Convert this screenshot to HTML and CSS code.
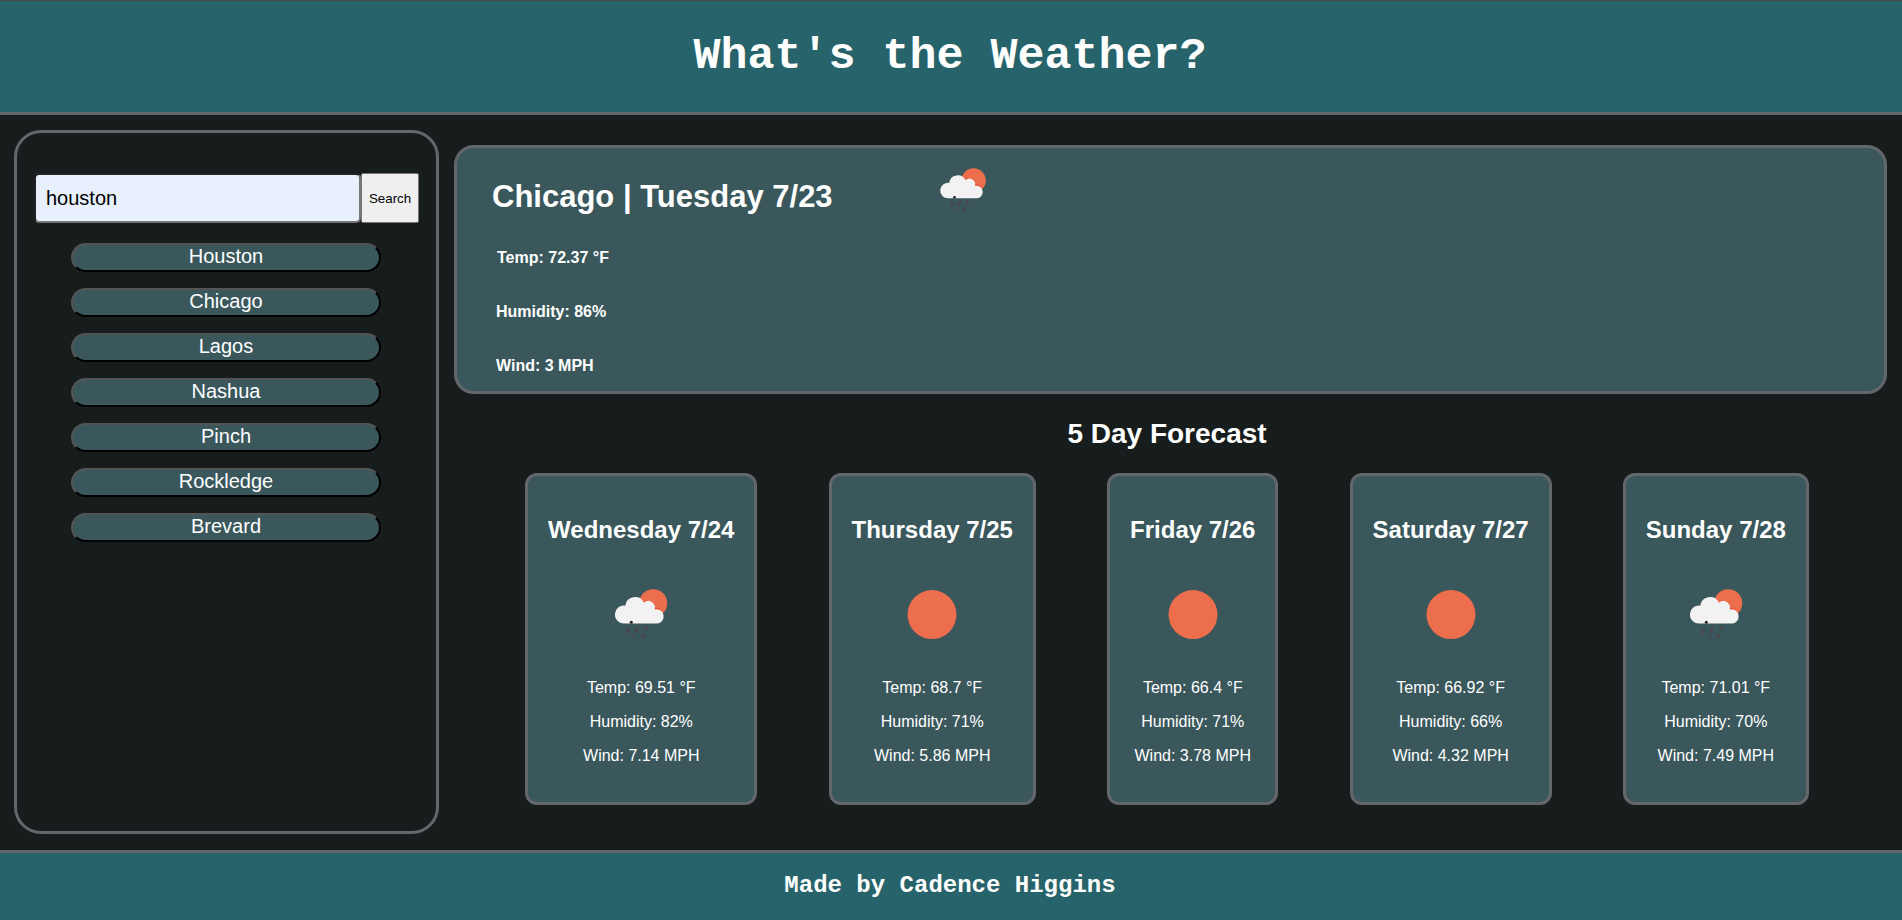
FILE: index.html
```html
<!DOCTYPE html>
<html lang="en">
<head>
<meta charset="utf-8">
<title>What's the Weather?</title>
<link rel="stylesheet" href="styles.css">
</head>
<body>
<svg class="defs" width="0" height="0">
  <symbol id="rain" viewBox="0 0 80 70">
    <circle cx="52.2" cy="28.2" r="14" fill="#ec6e4c"/>
    <path d="M40.5 30a7 7 0 0 1 13 3.800a6.500 6.500 0 0 1 6.300 2.500" fill="none" stroke="#e8472b" stroke-width="2"/>
    <path d="M23 48.600a9 9 0 1 1 1.200-17.900a9.900 9.900 0 0 1 18.600-3.200a6.800 6.800 0 0 1 11 6.900a7.200 7.200 0 1 1 1.300 14.200z" fill="#f2f2f2"/>
    <circle cx="30.300" cy="47.300" r="1.500" fill="#222"/>
    <path d="M27.600 54.500l-1.200 3M36.600 53.500l-1.600 3M45.400 51.500l-.7 1.500M33.400 61l-.2.500M42.300 60l-1 2.500" stroke="#4c484a" stroke-width="2.700" stroke-linecap="round"/>
  </symbol>
  <symbol id="sun" viewBox="0 0 80 70">
    <circle cx="40" cy="39.600" r="24.500" fill="#ec6e4c"/>
  </symbol>
</svg>
<header class="header"><h1 class="title">What's the Weather?</h1></header>
<main class="main">
  <aside class="sidebar">
    <form class="search">
      <input class="search-input" type="text" value="houston">
      <button class="search-button" type="button">Search</button>
    </form>
    <div class="history">
      <button class="city">Houston</button>
      <button class="city">Chicago</button>
      <button class="city">Lagos</button>
      <button class="city">Nashua</button>
      <button class="city">Pinch</button>
      <button class="city">Rockledge</button>
      <button class="city">Brevard</button>
    </div>
  </aside>
  <section class="weather">
    <article class="current">
      <div class="current-info">
        <h2 class="current-title">Chicago | Tuesday 7/23</h2>
        <p class="reading reading-temp">Temp: 72.37 °F</p>
        <p class="reading">Humidity: 86%</p>
        <p class="reading">Wind: 3 MPH</p>
      </div>
      <svg class="current-icon"><use href="#rain"/></svg>
    </article>
    <div class="outlook">
      <h2 class="forecast-title">5 Day Forecast</h2>
      <div class="forecast">
        <article class="day"><h3 class="day-title">Wednesday 7/24</h3><svg class="day-icon"><use href="#rain"/></svg><p class="stat">Temp: 69.51 °F</p><p class="stat">Humidity: 82%</p><p class="stat">Wind: 7.14 MPH</p></article>
        <article class="day"><h3 class="day-title">Thursday 7/25</h3><svg class="day-icon"><use href="#sun"/></svg><p class="stat">Temp: 68.7 °F</p><p class="stat">Humidity: 71%</p><p class="stat">Wind: 5.86 MPH</p></article>
        <article class="day"><h3 class="day-title">Friday 7/26</h3><svg class="day-icon"><use href="#sun"/></svg><p class="stat">Temp: 66.4 °F</p><p class="stat">Humidity: 71%</p><p class="stat">Wind: 3.78 MPH</p></article>
        <article class="day"><h3 class="day-title">Saturday 7/27</h3><svg class="day-icon"><use href="#sun"/></svg><p class="stat">Temp: 66.92 °F</p><p class="stat">Humidity: 66%</p><p class="stat">Wind: 4.32 MPH</p></article>
        <article class="day"><h3 class="day-title">Sunday 7/28</h3><svg class="day-icon"><use href="#rain"/></svg><p class="stat">Temp: 71.01 °F</p><p class="stat">Humidity: 70%</p><p class="stat">Wind: 7.49 MPH</p></article>
      </div>
    </div>
  </section>
</main>
<footer class="footer"><h2 class="credit">Made by Cadence Higgins</h2></footer>
</body>
</html>
```
FILE: styles.css
```css
* { box-sizing: border-box; }
body {
  margin: 0;
  height: 920px;
  display: flex;
  flex-direction: column;
  overflow: hidden;
  background: #171c1c;
  color: #fff;
  font-family: Arial, "Liberation Sans", sans-serif;
}
h1, h2, h3, p { margin: 0; }
.defs { position: absolute; }
.header {
  height: 115px;
  border-top: 1px solid #4a4a4a;
  border-bottom: 3px solid #63676c;
  background: #27636b;
  text-align: center;
}
.title {
  padding: 30px 2px 0 0;
  font: bold 45px/51px "Courier New", "Liberation Mono", monospace;
}
.main { flex: 1; display: flex; }
.sidebar {
  width: 425px;
  height: 704px;
  margin: 15px 0 0 14px;
  padding: 40px 17px 0 17px;
  border: 3px solid #63676c;
  border-radius: 27px;
}
.search { display: flex; align-items: flex-end; }
.search-input {
  width: 328px;
  height: 50px;
  padding: 0 10px;
  border: 2px inset #767676;
  border-radius: 5px;
  background: #e8f0fe;
  color: #000;
  font: 20px Arial, "Liberation Sans", sans-serif;
}
.search-button {
  width: 58px;
  height: 50px;
  padding: 0;
  border: 1px solid #767676;
  border-radius: 2px;
  background: #efefef;
  color: #000;
  font: 13.333px Arial, "Liberation Sans", sans-serif;
}
.history {
  display: flex;
  flex-direction: column;
  gap: 16px;
  margin: 20px 38px 0 37px;
}
.city {
  height: 29px;
  padding: 0 6px 2px;
  border: 2px outset #000;
  border-radius: 15px;
  background: #3a575c;
  color: #fff;
  font: 20px/23px Arial, "Liberation Sans", sans-serif;
}
.weather { width: 1433px; margin: 30px 0 0 15px; }
.current {
  display: flex;
  height: 249px;
  padding: 0 0 0 36px;
  border: 3px solid #63676c;
  border-radius: 20px;
  background: #3a575c;
}
.current-info { width: 435px; }
.current-title { margin: 30px 0 34px -1px; font-size: 31px; line-height: 37px; }
.reading { margin: 0 0 36px 3px; font-size: 16px; line-height: 18px; font-weight: bold; }
.reading-temp { margin-left: 4px; }
.current-icon { width: 70px; height: 61px; margin-top: 8px; }
.outlook { width: 1426px; }
.forecast-title { margin: 23px 0; font-size: 28px; line-height: 33px; text-align: center; }
.forecast { display: flex; justify-content: space-evenly; }
.day {
  height: 332px;
  padding: 40px 20px 0;
  border: 3px solid #63676c;
  border-radius: 12px;
  background: #3a575c;
  text-align: center;
}
.day-title { font-size: 24px; line-height: 27px; }
.day-icon { display: block; width: 80px; height: 70px; margin: 32px auto 34px; }
.stat { margin-bottom: 16px; font-size: 16px; line-height: 18px; }
.footer {
  height: 70px;
  border-top: 3px solid #63676c;
  background: #27636b;
  text-align: center;
}
.credit {
  padding: 19px 2px 0 0;
  font: bold 24px/27px "Courier New", "Liberation Mono", monospace;
}
```
